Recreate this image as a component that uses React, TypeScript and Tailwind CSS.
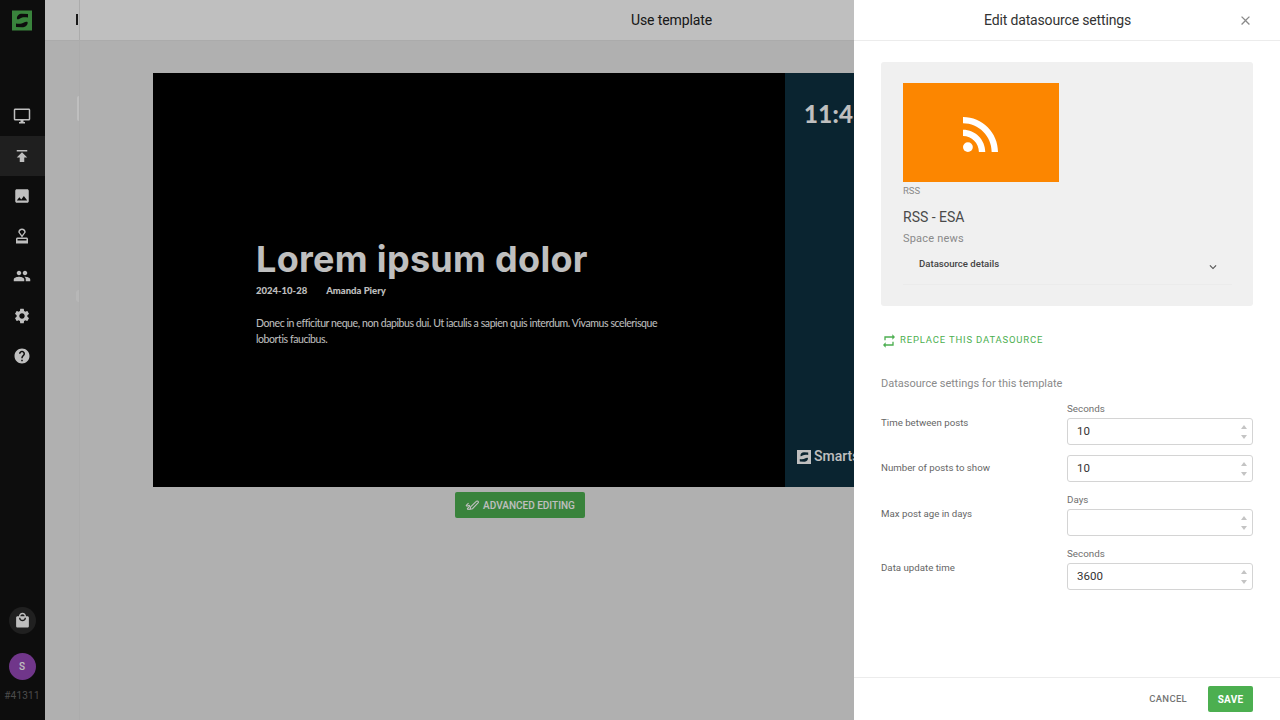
import React from "react";
import {
  MdOutlineDesktopWindows, MdPublish, MdImage, MdOutlineApproval, MdPeople, MdSettings, MdHelp,
  MdLocalMall, MdRepeat, MdRssFeed, MdKeyboardArrowDown, MdClose,
} from "react-icons/md";

const navIcons = [
  { Icon: MdOutlineDesktopWindows },
  { Icon: MdPublish, active: true },
  { Icon: MdImage },
  { Icon: MdOutlineApproval },
  { Icon: MdPeople },
  { Icon: MdSettings },
  { Icon: MdHelp },
];

function Logo({ className, bg, fg }: { className: string; bg: string; fg: string }) {
  return (
    <svg viewBox="0 0 20 20" className={className}>
      <rect width="20" height="20" fill={bg} />
      <path d="M5 8.8C4.4 5 7 3.2 10 3.2L16 3.4V7C13 6.4 10 6.5 8 7.9 7 8.7 6 9 5 8.8z" fill={fg} />
      <path d="M4 16.6V13C7 13.6 10 13.2 12 11.9 13 11.1 14.5 10.9 15.6 11.4 16.2 14.6 13 16.8 10 16.8z" fill={fg} />
    </svg>
  );
}

function NumberField({ caption, value }: { caption?: string; value?: string }) {
  return (
    <div className="w-[186px] flex flex-col">
      {caption && <div className="h-[17px] text-[9.8px] leading-[16px] text-[#6f6f6f]">{caption}</div>}
      <div className="relative h-[27px] border border-[#d4d4d4] rounded-[3px] bg-white flex items-center pl-[9px]">
        <span className="text-[11.5px] text-[#333333]">{value}</span>
        <div className="absolute right-[5px] top-[6px] flex flex-col gap-[6px]">
          <div className="w-0 h-0 border-x-[3.5px] border-x-transparent border-b-[4px] border-b-[#c4c4c4]" />
          <div className="w-0 h-0 border-x-[3.5px] border-x-transparent border-t-[4px] border-t-[#c4c4c4]" />
        </div>
      </div>
    </div>
  );
}

function Row({ label, caption, value }: { label: string; caption?: string; value?: string }) {
  return (
    <div className="flex items-center justify-between">
      <div className="text-[9.7px] text-[#666666]">{label}</div>
      <NumberField caption={caption} value={value} />
    </div>
  );
}

export default function App() {
  return (
    <div className="relative w-[1280px] h-[720px] overflow-hidden flex bg-[#ebebeb] font-['Roboto',sans-serif]">
      {/* sidebar */}
      <aside className="w-[45px] shrink-0 bg-[#121212] flex flex-col items-center">
        <div className="h-[96px] w-full pt-[10px] pl-[12px]">
          <Logo className="w-[20px] h-[21px]" bg="#4caf50" fg="#121212" />
        </div>
        {navIcons.map(({ Icon, active }, i) => (
          <div key={i} className={`w-full h-[40px] flex items-center justify-center pr-[1px] ${active ? "bg-[#2a2a2a]" : ""}`}>
            <Icon className="text-white" size={18} />
          </div>
        ))}
        <div className="mt-auto flex flex-col items-center pr-[1px]">
          <div className="w-[27px] h-[27px] rounded-full bg-[#2b2b2b] flex items-center justify-center">
            <MdLocalMall className="text-white" size={17} />
          </div>
          <div className="mt-[19px] w-[27px] h-[27px] rounded-full bg-[#9649b8] flex items-center justify-center text-[10px] font-medium text-white">S</div>
          <div className="mt-[10px] mb-[18px] text-[10px] leading-[12px] tracking-[0.2px] text-[#666666]">#41311</div>
        </div>
      </aside>

      {/* hidden left panel */}
      <div className="relative w-[35px] shrink-0 border-r border-[#e6e6e6] bg-[#ebebeb]">
        <div className="h-[41px] bg-white border-b border-[#e4e4e4]" />
        <div className="absolute right-[1px] top-[14px] w-[2px] h-[11px] bg-[#222222]" />
        <div className="absolute right-0 top-[96px] w-[2px] h-[25px] bg-white rounded-l-sm" />
        <div className="absolute right-0 top-[290px] w-[3px] h-[12px] bg-[#f5f5f5] rounded-l-full" />
      </div>

      {/* main */}
      <main className="flex-1 min-w-0 flex flex-col">
        <header className="h-[41px] shrink-0 bg-white border-b border-[#e4e4e4] flex items-center pl-[551px] text-[14px] text-[#222222] tracking-[-0.1px]">
          Use template
        </header>
        <div className="pt-[32px] pl-[73px]">
          <div className="w-[736px] flex flex-col items-center gap-[5px]">
            <div className="w-[736px] h-[414px] flex bg-black shrink-0">
              <div className="w-[632px] h-full pl-[103px] pt-[160px] text-white font-['Lato',sans-serif]">
                <div className="text-[36px] leading-[52px] font-['Inter',sans-serif] font-bold tracking-[0.3px] whitespace-nowrap">Lorem ipsum dolor</div>
                <div className="-mt-[1px] flex gap-[19px] text-[9.5px] leading-[14px] font-black">
                  <span>2024-10-28</span>
                  <span>Amanda Piery</span>
                </div>
                <p className="mt-[17px] w-[410px] text-[10.5px] leading-[16px] tracking-[-0.41px]">
                  Donec in efficitur neque, non dapibus dui. Ut iaculis a sapien quis interdum. Vivamus scelerisque lobortis faucibus.
                </p>
              </div>
              <div className="w-[104px] h-full bg-[#0e3140] flex flex-col justify-between pl-[12px] pt-[27px] pb-[20px]">
                <div className="pl-[7px] text-[24px] leading-[28px] font-black tracking-[0.3px] text-white font-['Lato',sans-serif] whitespace-nowrap">11:45</div>
                <div className="flex items-center gap-[3px]">
                  <Logo className="w-[14px] h-[14px]" bg="#ffffff" fg="#0e3140" />
                  <span className="text-[14px] font-medium text-white whitespace-nowrap">Smartsign</span>
                </div>
              </div>
            </div>
            <button className="mr-[2px] h-[26px] w-[130px] rounded-[2px] bg-[#4caf50] flex items-center justify-center gap-[3px] text-[10px] font-medium text-white">
              <svg viewBox="0 0 16 16" className="w-[15px] h-[15px]" fill="none" stroke="currentColor" strokeWidth="1.2">
                <path d="M6 9.5 12 3.6a1.2 1.2 0 0 1 1.9 1.7L8 11.4l-2.6.6z" />
                <path d="M3.8 5.5 1.6 7.6c-.6.7.2 1.3 1 1L4 8c.9-.3 1.2.5.6 1.1L2.8 11c-.6.7 0 1.4.9 1h1.6" />
              </svg>
              ADVANCED EDITING
            </button>
          </div>
        </div>
      </main>

      {/* overlay */}
      <div className="absolute inset-0 bg-black/25" />

      {/* drawer */}
      <section className="absolute right-0 top-0 bottom-0 w-[426px] bg-white flex flex-col">
        <div className="h-[41px] shrink-0 border-b border-[#ececec] flex items-center justify-between pl-[130px] pr-[27px]">
          <span className="text-[14px] text-[#333333] tracking-[-0.15px]">Edit datasource settings</span>
          <MdClose size={15} className="text-[#8a8a8a]" />
        </div>
        <div className="flex-1 px-[27px] pt-[21px]">
          <div className="h-[244px] bg-[#f0f0f0] rounded-[3px] px-[22px] pt-[21px]">
            <div className="w-[156px] h-[99px] bg-[#fc8600] flex items-center justify-center pt-[2px]">
              <MdRssFeed size={54} className="text-white" />
            </div>
            <div className="mt-[3px] text-[9.5px] leading-[12px] text-[#8a8a8a]">RSS</div>
            <div className="mt-[12px] text-[14px] leading-[16px] text-[#4a4a4a]">RSS - ESA</div>
            <div className="mt-[6px] text-[11px] leading-[16px] text-[#8a8a8a] tracking-[0.2px]">Space news</div>
            <div className="h-[38px] w-[329px] border-b border-[#ebebeb] flex items-start justify-between pl-[16px] pr-[12px] pt-[10px]">
              <span className="text-[9.6px] leading-[14px] font-medium text-[#444444]">Datasource details</span>
              <MdKeyboardArrowDown size={14} className="text-[#555555] mt-[3px]" />
            </div>
          </div>
          <div className="mt-[26px] h-[17px] flex items-center gap-[3px] text-[#4caf50]">
            <MdRepeat size={16} />
            <span className="text-[9.5px] tracking-[0.82px]">REPLACE THIS DATASOURCE</span>
          </div>
          <div className="mt-[27px] text-[11px] leading-[16px] text-[#8a8a8a]">Datasource settings for this template</div>
          <div className="mt-[9px] flex flex-col gap-[10px]">
            <Row label="Time between posts" caption="Seconds" value="10" />
            <Row label="Number of posts to show" value="10" />
            <Row label="Max post age in days" caption="Days" />
            <Row label="Data update time" caption="Seconds" value="3600" />
          </div>
        </div>
        <div className="h-[43px] shrink-0 border-t border-[#ececec] flex items-center justify-end gap-[21px] pr-[27px]">
          <span className="text-[9.5px] font-medium tracking-[0.3px] text-[#757575]">CANCEL</span>
          <button className="w-[45px] h-[26px] rounded-[2px] bg-[#4caf50] text-[10px] font-bold tracking-[0.2px] text-white">SAVE</button>
        </div>
      </section>
    </div>
  );
}
